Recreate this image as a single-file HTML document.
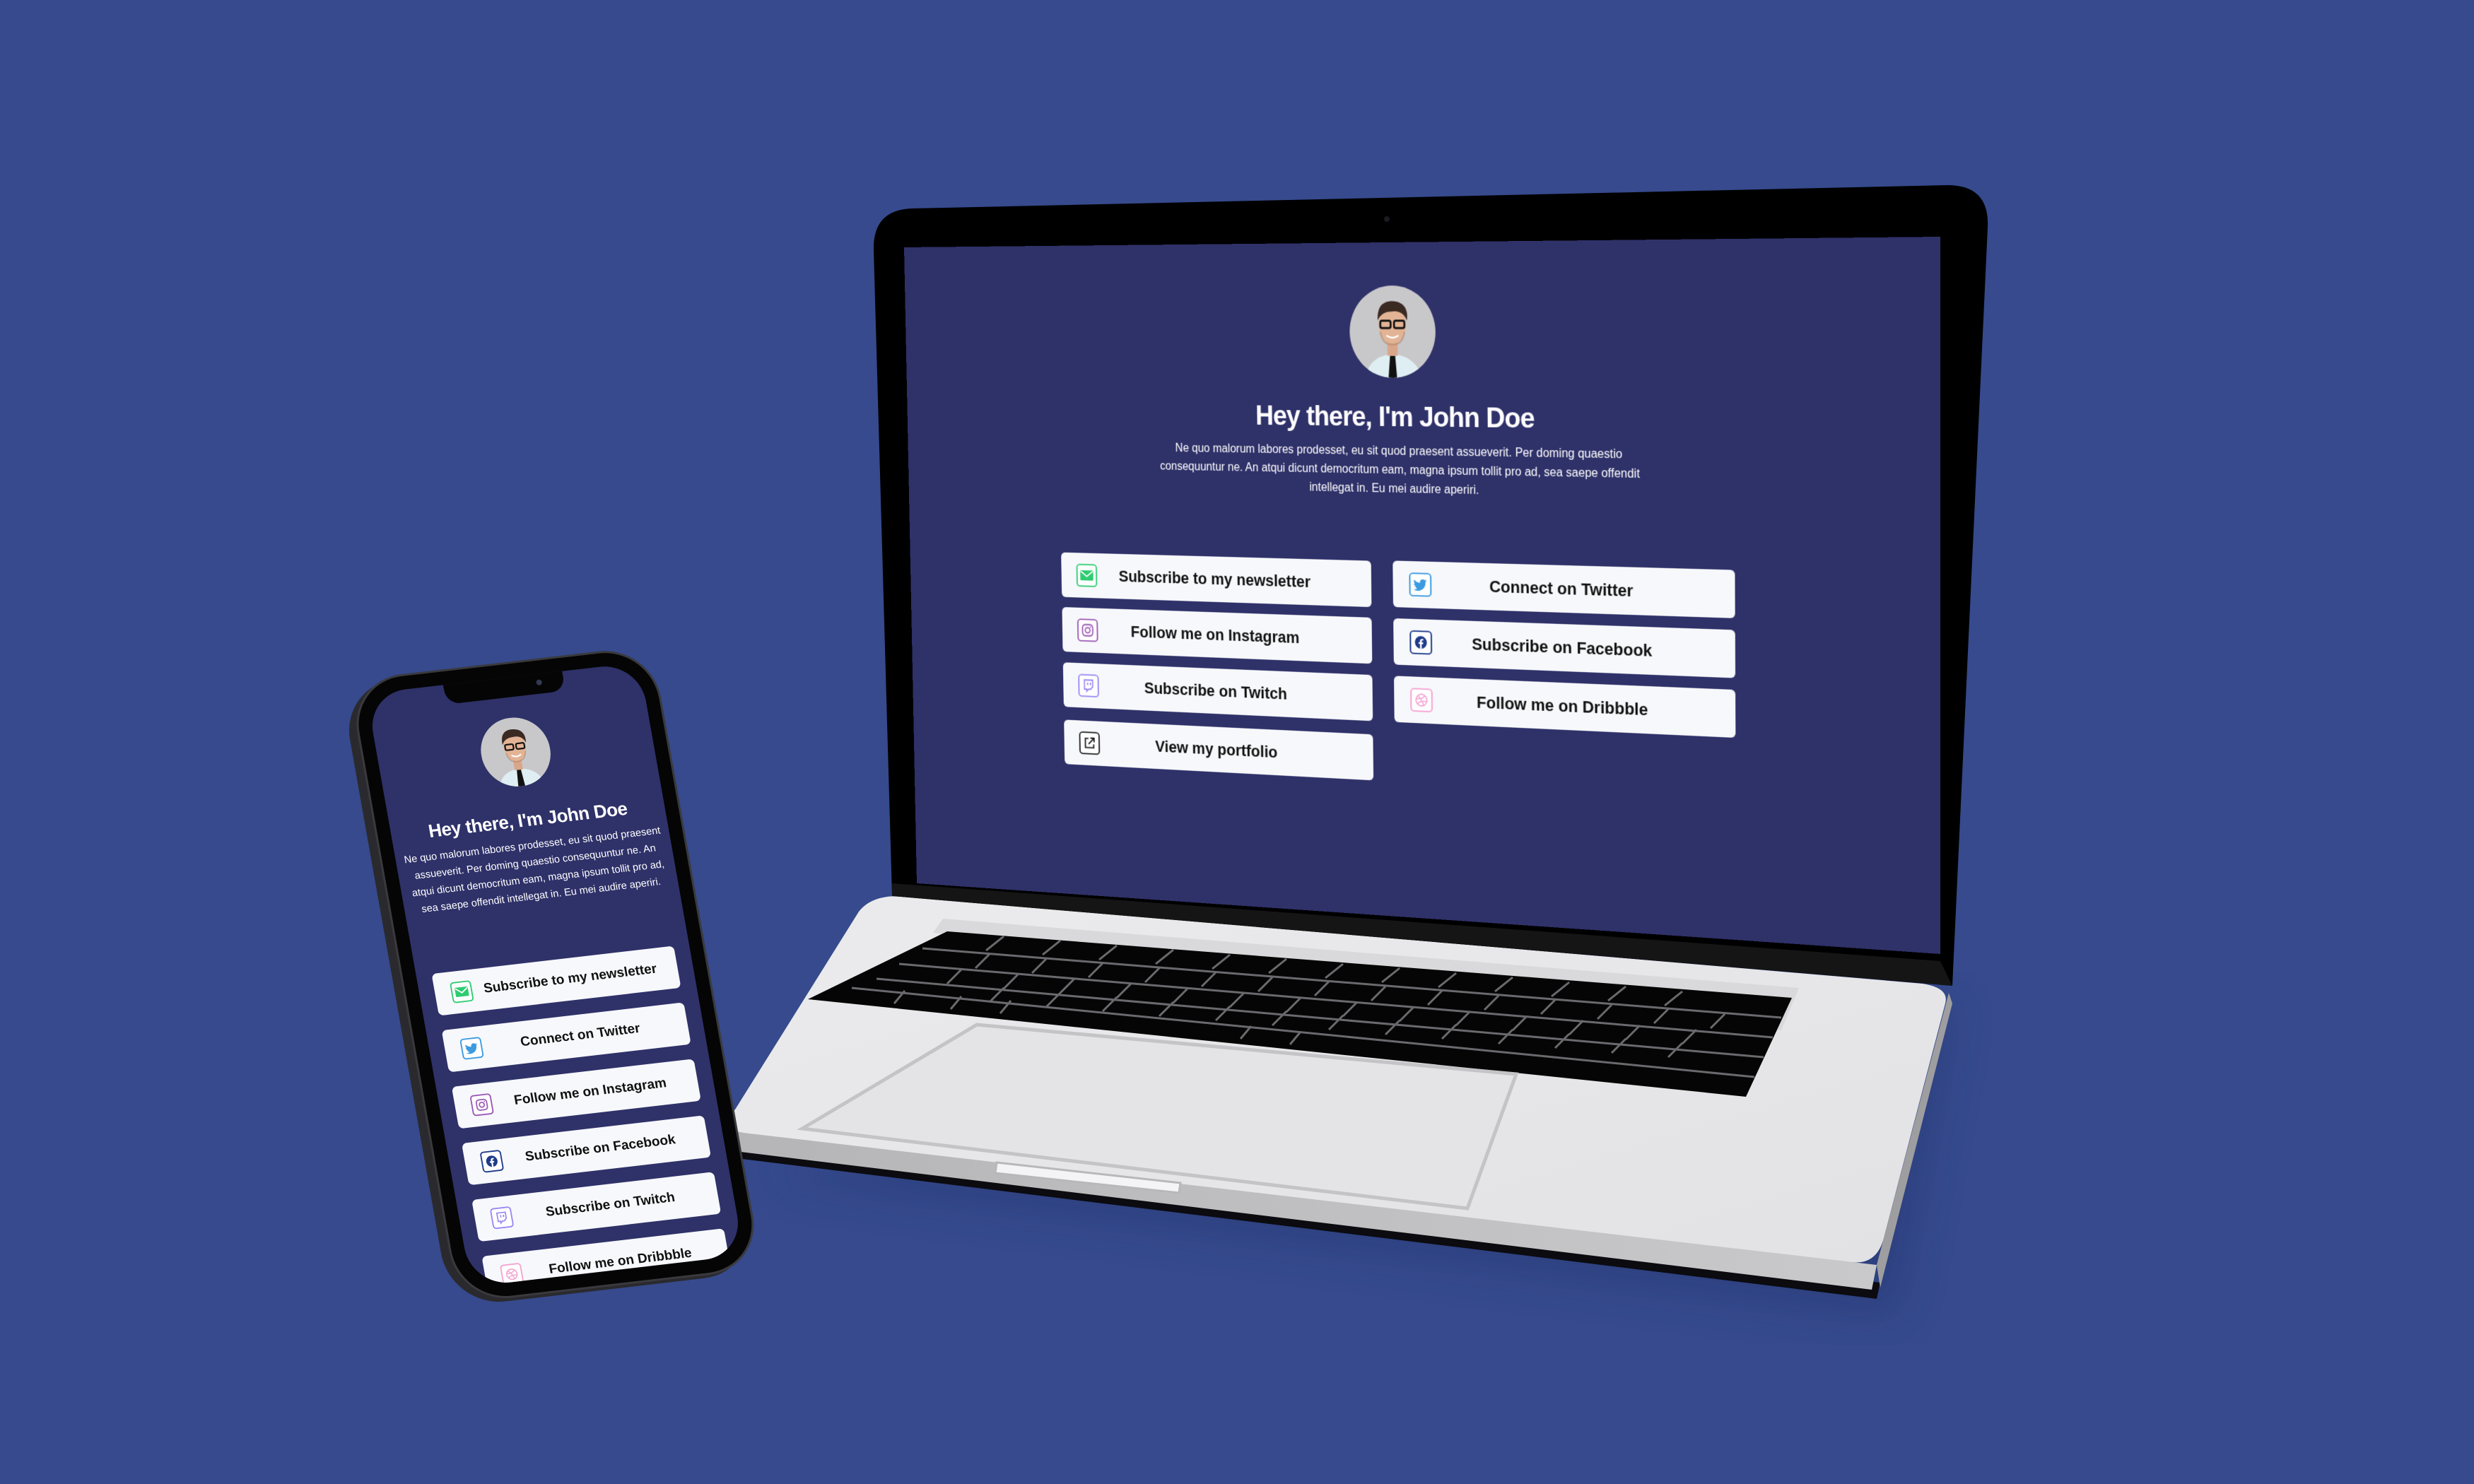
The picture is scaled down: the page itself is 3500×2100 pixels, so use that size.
<!DOCTYPE html>
<html><head><meta charset="utf-8"><style>
*{margin:0;padding:0;box-sizing:border-box}
html,body{width:3500px;height:2100px;overflow:hidden;background:#364a8d;font-family:"Liberation Sans",sans-serif}
.abs{position:absolute}
#scr{position:absolute;left:0;top:0;width:1466px;height:900px;background:#2f3169;transform-origin:0 0;
transform:matrix3d(0.78555,-0.036405,0,-0.00007812,0.037911,1.01727,0,0.000013812,0,0,1,0,1279,350,0,1)}
.btn{position:absolute;height:62px;background:#f7f8fb;border-radius:6px;display:flex;align-items:center;justify-content:center;font-weight:bold;color:#111;font-size:22px}
.btn svg{position:absolute;left:22px;top:14px;width:34px;height:34px}
.t{color:#fff;text-align:center;position:absolute;left:0;width:100%}
#ph{position:absolute;left:0;top:0;width:390px;height:850px;transform-origin:0 0;transform:matrix(0.99,-0.115,0.175,0.987,518,982)}
.pbtn{position:absolute;left:22px;width:346px;height:60px;background:#f7f8fb;border-radius:7px;font-weight:bold;font-size:19px;color:#111;display:flex;align-items:center;justify-content:center;padding-left:40px}
.pbtn svg{position:absolute;left:22px;top:14px;width:32px;height:32px}
</style></head><body>
<svg width="0" height="0" style="position:absolute">
<defs>
<symbol id="av" viewBox="0 0 100 100">
<rect width="100" height="100" fill="#c8c8ca"/>
<path d="M18 100 C22 80 36 76 50 74 C64 76 78 80 84 100Z" fill="#dfeef2"/>
<path d="M47 76 L53 76 L55 100 L45 100Z" fill="#111"/>
<rect x="44" y="58" width="12" height="18" fill="#d9a68a"/>
<ellipse cx="50" cy="42" rx="16" ry="21" fill="#e2b394"/>
<path d="M33 38 C32 20 42 16 52 17 C64 18 69 26 67 38 C64 30 58 27 50 28 C42 28 36 31 33 38Z" fill="#3a2a22"/>
<rect x="36" y="38" width="12" height="8" rx="2" fill="none" stroke="#111" stroke-width="2.2"/>
<rect x="52" y="38" width="12" height="8" rx="2" fill="none" stroke="#111" stroke-width="2.2"/>
<path d="M43 54 Q50 59 57 54" stroke="#fff" stroke-width="2" fill="none"/>
<path d="M36 50 Q38 64 50 64 Q62 64 64 50" fill="none" stroke="#b58a6c" stroke-width="2" opacity=".6"/>
</symbol>
<symbol id="i-mail" viewBox="0 0 24 24"><rect x="1.5" y="1.5" width="21" height="21" rx="3" fill="#fff" stroke="#2ecc71" stroke-width="1.4"/><rect x="5" y="7" width="14" height="10" rx="1" fill="#2ecc71"/><path d="M5.5 8l6.5 5 6.5-5" stroke="#fff" stroke-width="1.3" fill="none"/></symbol>
<symbol id="i-tw" viewBox="0 0 24 24"><rect x="1.5" y="1.5" width="21" height="21" rx="3" fill="#fff" stroke="#3b9be0" stroke-width="1.4"/><path d="M18.5 8.2c-.5.2-1 .4-1.6.4.6-.3 1-.9 1.2-1.5-.5.3-1.1.5-1.7.7a2.7 2.7 0 0 0-4.6 2.5C9.5 10.200 7.500 9.200 6 7.600c-.7 1.200-.3 2.800.8 3.600-.4 0-.8-.1-1.200-.3 0 1.300.9 2.400 2.200 2.700-.4.1-.8.1-1.200 0 .3 1.100 1.400 1.900 2.500 1.900A5.500 5.500 0 0 1 5.300 16.500 7.700 7.700 0 0 0 17.200 9.700V9.300c.5-.3.9-.7 1.300-1.100z" fill="#3b9be0"/></symbol>
<symbol id="i-ig" viewBox="0 0 24 24"><rect x="1.5" y="1.5" width="21" height="21" rx="3" fill="#fff" stroke="#9b59b6" stroke-width="1.4"/><rect x="6.5" y="6.5" width="11" height="11" rx="3" fill="none" stroke="#9b59b6" stroke-width="1.3"/><circle cx="12" cy="12" r="2.6" fill="none" stroke="#9b59b6" stroke-width="1.3"/><circle cx="15.2" cy="8.8" r=".7" fill="#9b59b6"/></symbol>
<symbol id="i-fb" viewBox="0 0 24 24"><rect x="1.5" y="1.5" width="21" height="21" rx="3" fill="#fff" stroke="#1e3a8a" stroke-width="1.4"/><circle cx="12" cy="12" r="6" fill="#1e3a8a"/><path d="M12.8 18v-4.5h1.400l.2-1.600h-1.600v-1c0-.5.2-.8.8-.8h.9V8.700c-.2 0-.7-.1-1.300-.1-1.300 0-2.100.8-2.100 2.100v1.200H9.700v1.600h1.400V18z" fill="#fff"/></symbol>
<symbol id="i-tc" viewBox="0 0 24 24"><rect x="1.5" y="1.5" width="21" height="21" rx="3" fill="#fff" stroke="#9b87f5" stroke-width="1.4"/><path d="M7.5 6.500h9v6.500l-2.500 2.500h-2l-2 2v-2H7.500z" fill="none" stroke="#9b87f5" stroke-width="1.3"/><path d="M11 9v2.500M14 9v2.500" stroke="#9b87f5" stroke-width="1.3"/></symbol>
<symbol id="i-dr" viewBox="0 0 24 24"><rect x="1.5" y="1.5" width="21" height="21" rx="3" fill="#fff" stroke="#f5a3d2" stroke-width="1.4"/><circle cx="12" cy="12" r="5.5" fill="none" stroke="#f5a3d2" stroke-width="1.2"/><path d="M8.500 7.800c3 3 5 6 5.500 9.300M6.700 10.800c3 .4 6.300-.4 8.600-2.600M7.800 15.700c2-2.300 5-3.200 9.500-2.400" fill="none" stroke="#f5a3d2" stroke-width="1.1"/></symbol>
<symbol id="i-ex" viewBox="0 0 24 24"><rect x="1.5" y="1.5" width="21" height="21" rx="3" fill="#fff" stroke="#222" stroke-width="1.4"/><path d="M11 7.500H7.500v9h9V13M13 7h4v4M17 7l-6 6" fill="none" stroke="#222" stroke-width="1.4"/></symbol>
<linearGradient id="gtop" x1="0" y1="0" x2="1" y2="1"><stop offset="0" stop-color="#ebebed"/><stop offset="1" stop-color="#e2e2e4"/></linearGradient>
<linearGradient id="glip" x1="0" y1="0" x2="1" y2="0"><stop offset="0" stop-color="#b5b5b7"/><stop offset="1" stop-color="#c9c9cb"/></linearGradient>
<filter id="bl"><feGaussianBlur stdDeviation="30"/></filter>
</defs></svg>

<svg class="abs" style="left:0;top:0" width="3500" height="2100">
<path d="M1080 1660 L2680 1860 L2760 1420 Z" fill="#24356f" opacity=".5" filter="url(#bl)"/>
<path d="M1045 1610 L2660 1815 L2655 1838 L1050 1640Z" fill="#0b0b10"/>
<path d="M1020 1598 L2655 1790 L2648 1825 L1048 1630 Q1020 1620 1020 1598Z" fill="url(#glip)"/>
<path d="M2757 1405 L2762 1420 L2660 1822 L2655 1790Z" fill="#9e9ea0"/>
<path d="M1270 1268 L2720 1392 Q2758 1398 2752 1420 L2665 1752 Q2655 1790 2620 1786 L1060 1604 Q1005 1598 1040 1570 L1215 1290 Q1232 1268 1270 1268Z" fill="url(#gtop)"/>
<path d="M1334 1300 L2545 1398 L2520 1458 L1320 1320Z" fill="#d9d9db"/>
<path d="M1340 1318 L2535 1412 L2470 1552 L1143 1414Z" fill="#050505"/>
<g stroke="#6a6a6e" stroke-width="3" fill="none">
<path d="M1305 1342 L2520 1440"/><path d="M1272 1364 L2508 1468"/><path d="M1240 1385 L2495 1496"/><path d="M1205 1398 L2482 1524"/>
</g>
<g stroke="#6a6a6e" stroke-width="3">
<path d="M1420 1325 L1395 1345M1500 1331 L1475 1351M1580 1338 L1555 1358M1660 1344 L1635 1364M1740 1351 L1715 1371M1820 1357 L1795 1377M1900 1364 L1875 1384M1980 1370 L1955 1390M2060 1377 L2035 1397M2140 1383 L2115 1403M2220 1390 L2195 1410M2300 1396 L2275 1416M2380 1403 L2355 1423"/>
<path d="M1400 1350 L1380 1370M1480 1357 L1460 1377M1560 1363 L1540 1383M1640 1370 L1620 1390M1720 1376 L1700 1396M1800 1383 L1780 1403M1880 1389 L1860 1409M1960 1396 L1940 1416M2040 1402 L2020 1422M2120 1409 L2100 1429M2200 1415 L2180 1435M2280 1422 L2260 1442M2360 1428 L2340 1448M2440 1435 L2420 1455"/>
<path d="M1360 1372 L1340 1392M1440 1379 L1420 1399M1520 1385 L1500 1405M1600 1392 L1580 1412M1680 1399 L1660 1419M1760 1405 L1740 1425M1840 1412 L1820 1432M1920 1418 L1900 1438M2000 1425 L1980 1445M2080 1431 L2060 1451M2160 1438 L2140 1458M2240 1444 L2220 1464M2320 1451 L2300 1471M2400 1457 L2380 1477"/>
<path d="M1420 1398 L1400 1418M1500 1405 L1480 1425M1580 1411 L1560 1431M1660 1418 L1640 1438M1740 1424 L1720 1444M1820 1431 L1800 1451M1900 1437 L1880 1457M1980 1444 L1960 1464M2060 1450 L2040 1470M2140 1457 L2120 1477M2220 1463 L2200 1483M2300 1470 L2280 1490M2380 1476 L2360 1496"/>
<path d="M1280 1402 L1265 1420M1360 1410 L1345 1428M1430 1416 L1415 1434M1770 1452 L1755 1470M1840 1460 L1825 1478"/>
</g>
<path d="M1382 1450 L2145 1520 L2076 1710 L1135 1597Z" fill="#e4e4e6" stroke="#c4c4c6" stroke-width="5"/>
<path d="M1410 1645 L1670 1674 L1668 1688 L1408 1660Z" fill="#f4f4f6" stroke="#b8b8ba" stroke-width="3"/>
<path d="M1290 295 L2755 262 Q2815 262 2812 322 L2762 1395 L1262 1268 L1236 355 Q1234 297 1290 295Z" fill="#000"/>
<path d="M1262 1250 L2745 1360 L2762 1395 L1262 1268Z" fill="#151515"/>
<circle cx="1962" cy="310" r="4" fill="#1a1a22"/>
</svg>

<div id="scr">
<svg class="abs" style="left:673px;top:57px" width="122" height="122" viewBox="0 0 100 100"><clipPath id="cc"><circle cx="50" cy="50" r="50"/></clipPath><use href="#av" clip-path="url(#cc)"/></svg>
<div class="t" style="top:210px;font-size:37px;font-weight:bold;letter-spacing:-1px">Hey there, I'm John Doe</div>
<div class="t" style="top:264px;font-size:16px;line-height:25px;left:388px;width:690px">Ne quo malorum labores prodesset, eu sit quod praesent assueverit. Per doming quaestio consequuntur ne. An atqui dicunt democritum eam, magna ipsum tollit pro ad, sea saepe offendit intellegat in. Eu mei audire aperiri.</div>
<div class="btn" style="left:238px;top:423px;width:462px"><svg><use href="#i-mail"/></svg>Subscribe to my newsletter</div>
<div class="btn" style="left:238px;top:499px;width:462px"><svg><use href="#i-ig"/></svg>Follow me on Instagram</div>
<div class="btn" style="left:238px;top:576px;width:462px"><svg><use href="#i-tc"/></svg>Subscribe on Twitch</div>
<div class="btn" style="left:238px;top:656px;width:462px"><svg><use href="#i-ex"/></svg>View my portfolio</div>
<div class="btn" style="left:731px;top:422px;width:470px"><svg><use href="#i-tw"/></svg>Connect on Twitter</div>
<div class="btn" style="left:731px;top:499px;width:470px"><svg><use href="#i-fb"/></svg>Subscribe on Facebook</div>
<div class="btn" style="left:731px;top:576px;width:470px"><svg><use href="#i-dr"/></svg>Follow me on Dribbble</div>
</div>

<div id="ph">
<div class="abs" style="left:-34px;top:-16px;width:440px;height:892px;border-radius:78px;background:#2a2a2e"></div>
<div class="abs" style="left:-22px;top:-22px;width:434px;height:894px;border-radius:76px;background:#050505;border:3px solid #3a3a3e"></div>
<div class="abs" style="left:0;top:0;width:390px;height:850px;border-radius:56px;background:#2f3169;overflow:hidden">
<div class="abs" style="left:110px;top:-2px;width:170px;height:30px;background:#050505;border-radius:0 0 20px 20px"></div>
<div class="abs" style="left:241px;top:8px;width:8px;height:8px;border-radius:50%;background:#333a55"></div>
<svg class="abs" style="left:146px;top:57px" width="98" height="98" viewBox="0 0 100 100"><clipPath id="cc2"><circle cx="50" cy="50" r="50"/></clipPath><use href="#av" clip-path="url(#cc2)"/></svg>
<div class="t" style="top:188px;font-size:26px;font-weight:bold;letter-spacing:-.5px">Hey there, I'm John Doe</div>
<div class="t" style="top:228px;left:12px;width:366px;font-size:14.5px;line-height:24px">Ne quo malorum labores prodesset, eu sit quod praesent assueverit. Per doming quaestio consequuntur ne. An atqui dicunt democritum eam, magna ipsum tollit pro ad, sea saepe offendit intellegat in. Eu mei audire aperiri.</div>
<div class="pbtn" style="top:404px"><svg><use href="#i-mail"/></svg>Subscribe to my newsletter</div>
<div class="pbtn" style="top:485px"><svg><use href="#i-tw"/></svg>Connect on Twitter</div>
<div class="pbtn" style="top:566px"><svg><use href="#i-ig"/></svg>Follow me on Instagram</div>
<div class="pbtn" style="top:647px"><svg><use href="#i-fb"/></svg>Subscribe on Facebook</div>
<div class="pbtn" style="top:728px"><svg><use href="#i-tc"/></svg>Subscribe on Twitch</div>
<div class="pbtn" style="top:809px"><svg><use href="#i-dr"/></svg>Follow me on Dribbble</div>
</div>
</div>
</body></html>
